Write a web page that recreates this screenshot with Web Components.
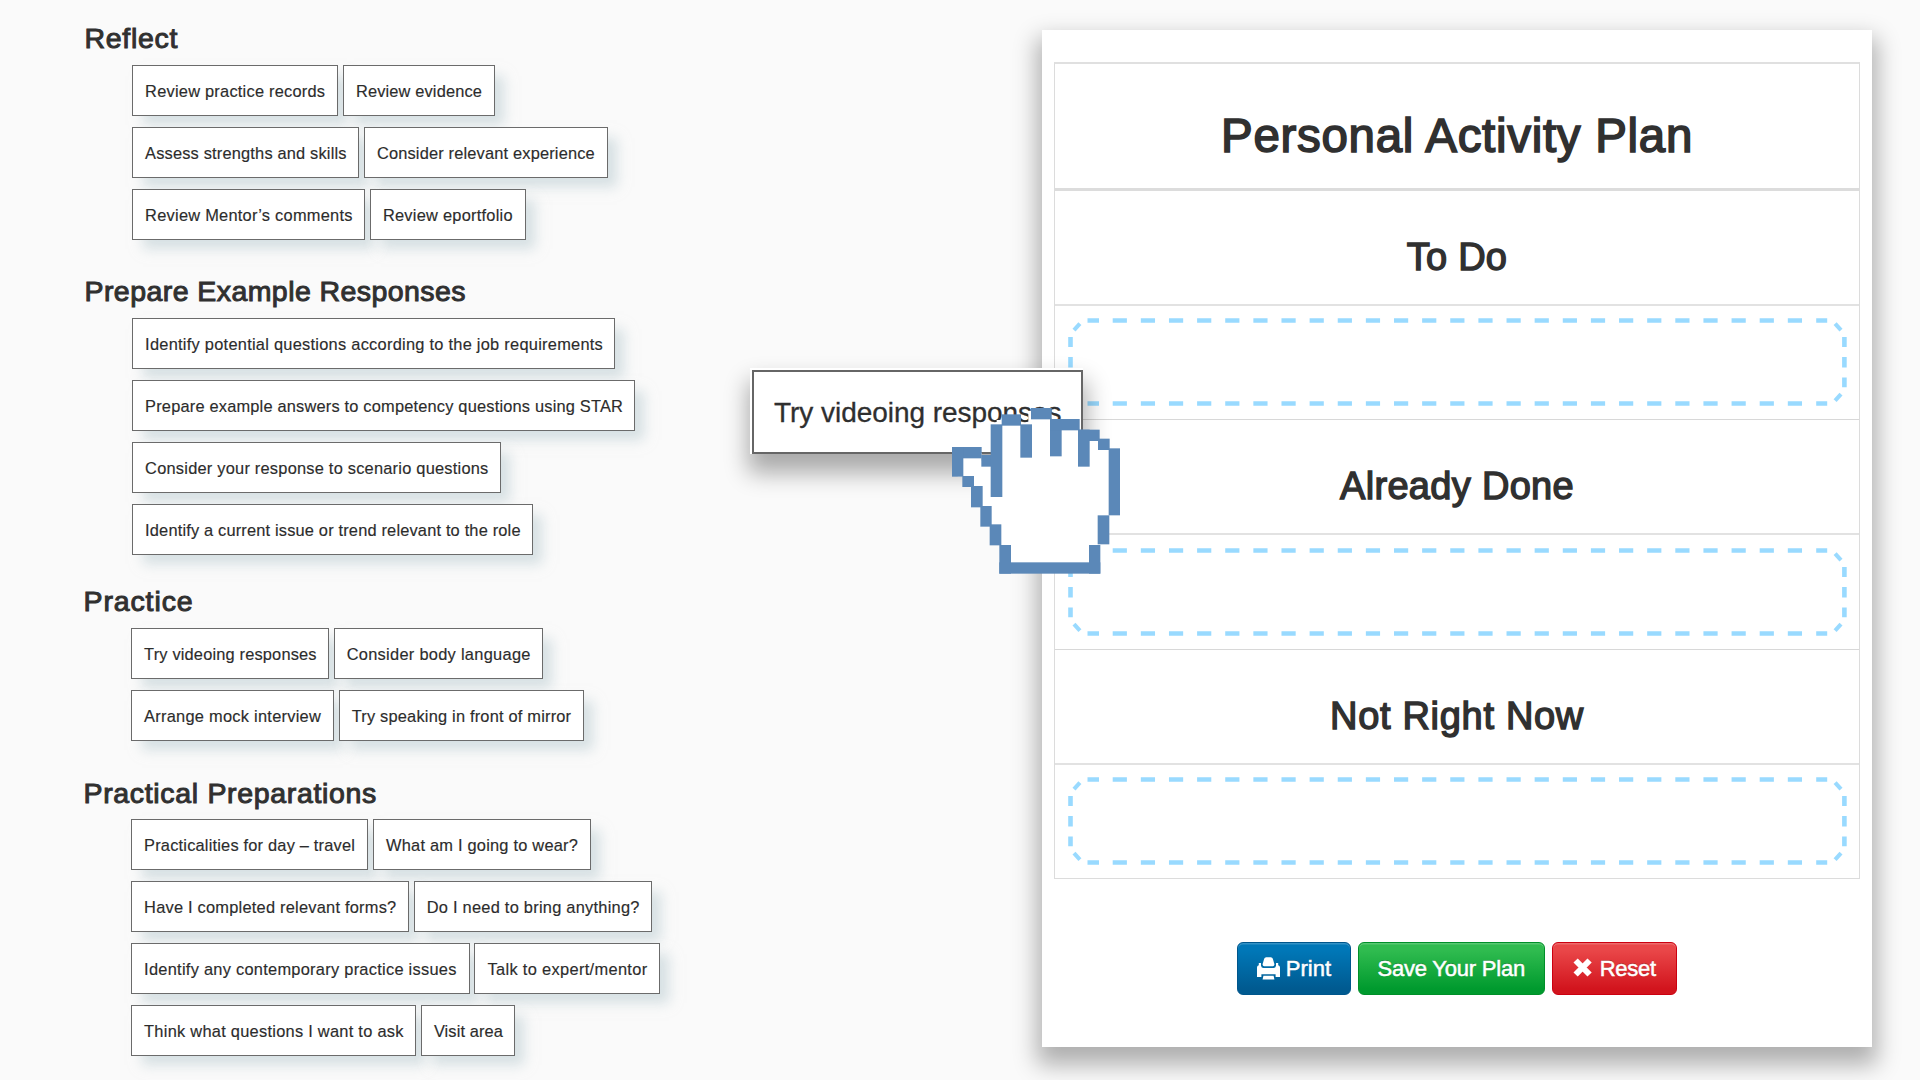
<!DOCTYPE html>
<html lang="en">
<head>
<meta charset="utf-8">
<title>Personal Activity Plan</title>
<style>
  html, body { margin: 0; padding: 0; }
  body {
    width: 1920px; height: 1080px; overflow: hidden;
    background: #fafafa; color: #303030;
    font-family: "Liberation Sans", Arial, sans-serif;
  }
</style>
</head>
<body>
<plan-page>
  <activity-group slot="groups" style="--top:21px;--left:84.500px;--h:44px;--indent:47.500px">
    <fit-text slot="title" w="93.500">Reflect</fit-text>
    <chip-row>
      <activity-chip w="206.3" t="180.2">Review practice records</activity-chip>
      <activity-chip w="152.2" t="126">Review evidence</activity-chip>
    </chip-row>
    <chip-row>
      <activity-chip w="227.2" t="201.6">Assess strengths and skills</activity-chip>
      <activity-chip w="244.2" t="218">Consider relevant experience</activity-chip>
    </chip-row>
    <chip-row>
      <activity-chip w="233.2" t="207.600">Review Mentor’s comments</activity-chip>
      <activity-chip w="156" t="130">Review eportfolio</activity-chip>
    </chip-row>
  </activity-group>

  <activity-group slot="groups" style="--top:34px;--left:84.500px;--h:44px;--indent:47.500px">
    <fit-text slot="title" w="381.500">Prepare Example Responses</fit-text>
    <chip-row><activity-chip w="483.4" t="458">Identify potential questions according to the job requirements</activity-chip></chip-row>
    <chip-row><activity-chip w="503.4" t="478">Prepare example answers to competency questions using STAR</activity-chip></chip-row>
    <chip-row><activity-chip w="368.8" t="343.4">Consider your response to scenario questions</activity-chip></chip-row>
    <chip-row><activity-chip w="401.4" t="375.6">Identify a current issue or trend relevant to the role</activity-chip></chip-row>
  </activity-group>

  <activity-group slot="groups" style="--top:29px;--left:83.500px;--h:44px;--indent:47.500px">
    <fit-text slot="title" w="110">Practice</fit-text>
    <chip-row>
      <activity-chip w="198" t="172.600">Try videoing responses</activity-chip>
      <activity-chip w="209" t="184">Consider body language</activity-chip>
    </chip-row>
    <chip-row>
      <activity-chip w="203" t="177">Arrange mock interview</activity-chip>
      <activity-chip w="245.4" t="219.600">Try speaking in front of mirror</activity-chip>
    </chip-row>
  </activity-group>

  <activity-group slot="groups" style="--top:35px;--left:83.500px;--h:43px;--indent:47.500px">
    <fit-text slot="title" w="293.500">Practical Preparations</fit-text>
    <chip-row>
      <activity-chip w="237.4" t="211">Practicalities for day – travel</activity-chip>
      <activity-chip w="218" t="192">What am I going to wear?</activity-chip>
    </chip-row>
    <chip-row>
      <activity-chip w="278" t="252.3">Have I completed relevant forms?</activity-chip>
      <activity-chip w="238.6" t="213">Do I need to bring anything?</activity-chip>
    </chip-row>
    <chip-row>
      <activity-chip w="338.8" t="312.600">Identify any contemporary practice issues</activity-chip>
      <activity-chip w="185.4" t="160">Talk to expert/mentor</activity-chip>
    </chip-row>
    <chip-row>
      <activity-chip w="285.2" t="259.600">Think what questions I want to ask</activity-chip>
      <activity-chip w="94.4" t="69">Visit area</activity-chip>
    </chip-row>
  </activity-group>

  <plan-panel slot="panel">
    <fit-text slot="title" w="472">Personal Activity Plan</fit-text>
    <plan-section><fit-text w="100.500">To Do</fit-text></plan-section>
    <plan-section><fit-text w="234">Already Done</fit-text></plan-section>
    <plan-section><fit-text w="254">Not Right Now</fit-text></plan-section>
    <plan-button slot="actions" style="--w:114px;--a:#0077b7;--b:#005a90;--edge:#00568c">
      <svg slot="icon" width="23" height="23" viewBox="0 0 23 23" fill="#fff"><path d="M7.200 1.800Q7.700 .3 9.200 .3h4.600q1.500 0 2 1.500l1.500 5q.4 2.400-1.500 2.400H7.200q-1.900 0-1.500-2.400z"/><path d="M1.800 6h2.200v2.800q.4 2.200 2.500 2.200h10q2.100 0 2.500-2.200V6h2.200v2.300q1.800.3 1.800 2.200v9.500h-4.400v-2.700H4.400V20H0v-9.500q0-1.900 1.800-2.200z"/><path d="M6.400 18.800h10.200l.8 3.600H5.600z"/></svg>
      <fit-text w="45.500">Print</fit-text>
    </plan-button>
    <plan-button slot="actions" style="--w:187.500px;--a:#2fbb4f;--b:#009a2e;--edge:#008f29;--g:0px">
      <fit-text w="147.500">Save Your Plan</fit-text>
    </plan-button>
    <plan-button slot="actions" style="--w:125.500px;--a:#e94648;--b:#d2141d;--edge:#cc0010;--g:8px">
      <svg slot="icon" width="19" height="23" viewBox="0 0 19 23" fill="none" stroke="#fff" stroke-width="6"><path d="M2.600 3.500L16.600 17.500M16.600 3.500L2.600 17.500"/></svg>
      <fit-text w="56">Reset</fit-text>
    </plan-button>
  </plan-panel>

  <drag-card slot="overlay"><fit-text w="287.500">Try videoing responses</fit-text></drag-card>
  <hand-cursor slot="overlay"></hand-cursor>
</plan-page>

<script>
const define = (name, html, ready) => {
  const tpl = document.createElement('template');
  tpl.innerHTML = html;
  customElements.define(name, class extends HTMLElement {
    connectedCallback() {
      if (this.shadowRoot) return;
      this.attachShadow({ mode: 'open' }).appendChild(tpl.content.cloneNode(true));
      if (ready) ready(this, this.shadowRoot);
    }
  });
};

// Spreads the letters of a text so that its line has the given width.
const fit = (el, text, width) => {
  el.style.letterSpacing = '0px';
  const natural = el.getBoundingClientRect().width;
  el.style.letterSpacing = ((width - natural) / text.trim().length).toFixed(4) + 'px';
};

define('plan-page', `
  <style>
    :host { display: flex; position: relative; width: 1920px; height: 1080px; overflow: hidden; }
    .groups { width: 1042px; flex: none; display: flex; flex-direction: column; }
  </style>
  <div class="groups"><slot name="groups"></slot></div>
  <slot name="panel"></slot>
  <slot name="overlay"></slot>`);

define('activity-group', `
  <style>
    :host { display: block; padding: var(--top) 0 0 var(--left); }
    .title { height: var(--h); line-height: 34px; font-size: 28.500px; -webkit-text-stroke: 1px #303030; }
    .rows { padding-left: var(--indent); display: flex; flex-direction: column; gap: 11px; }
  </style>
  <div class="title"><slot name="title"></slot></div>
  <div class="rows"><slot></slot></div>`);

define('chip-row', `
  <style>:host { display: flex; gap: 4.600px; }</style>
  <slot></slot>`);

define('activity-chip', `
  <style>
    :host { display: block; box-sizing: border-box; height: 51px; line-height: 50px; padding-left: 12.100px;
      border: 1px solid #6b6b6b; background: #fff; font-size: 16.400px; white-space: nowrap; color: #2c2c2c;
      -webkit-text-stroke: .15px #2c2c2c;
      box-shadow: 10px 10px 12px -1px rgba(190, 206, 212, .6); }
    span { display: inline-block; }
  </style>
  <span><slot></slot></span>`);

define('fit-text', `
  <style>
    :host { display: inline-block; white-space: nowrap; }
  </style>
  <slot></slot>`);

define('plan-panel', `
  <style>
    :host { display: block; flex: none; box-sizing: border-box; width: 830px; height: 1017px; margin-top: 30px;
      padding: 32px 12px 0; background: #fff; box-shadow: 0 13px 22px 5px rgba(0,0,0,.3); }
    .table { border: 1px solid #dcdcdc; border-top: 2px solid #e0e0e0; box-sizing: border-box; height: 817px; }
    .title { display: flex; justify-content: center; box-sizing: border-box; height: 126.500px; padding-top: 44px;
      border-bottom: 3px solid #dcdcdc; line-height: 56px; font-size: 47.500px; -webkit-text-stroke: 1.600px #303030; }
    .actions { display: flex; justify-content: center; gap: 6.500px; padding-top: 63px; }
  </style>
  <div class="table">
    <div class="title"><slot name="title"></slot></div>
    <slot></slot>
  </div>
  <div class="actions"><slot name="actions"></slot></div>`);

define('plan-section', `
  <style>
    :host { display: block; box-sizing: border-box; height: 229.600px; border-bottom: 1px solid #d8d8d8; }
    :host(:last-of-type) { border-bottom: 0; }
    .head { box-sizing: border-box; height: 115px; border-bottom: 2px solid #e2e2e2; padding-top: 42px;
      line-height: 48px; text-align: center; font-size: 38px; -webkit-text-stroke: 1.400px #303030; }
    .zone { padding: 12.600px 0 0 12.600px; }
    svg { display: block; }
  </style>
  <div class="head"><slot></slot></div>
  <div class="zone"><svg width="779" height="89" fill="none" stroke="#99daff" stroke-width="4.600"></svg></div>`,
(host, root) => {
  let h = 'M19.500 0h11.500M748.200 0h11';
  for (let i = 0; i < 25; i++) h += `M${(44.700 + i * 28.130).toFixed(2)} 0h14.200`;
  const v = 'M0 19v9.900M0 39v10.400M0 59.400v9.800';
  const corner = 'M6 12.100L11.900 5.700';
  root.querySelector('svg').innerHTML = `
    <path d="${h}" transform="translate(0 2.500)"/><path d="${h}" transform="translate(0 85.500)"/>
    <path d="${v}" transform="translate(2.500 0)"/><path d="${v}" transform="translate(776.400 0)"/>
    <g stroke-width="4.100"><path d="${corner}"/><path d="${corner}" transform="matrix(-1 0 0 1 779 0)"/>
    <path d="${corner}" transform="matrix(1 0 0 -1 0 88.300)"/><path d="${corner}" transform="matrix(-1 0 0 -1 779 88.300)"/></g>`;
});

define('plan-button', `
  <style>
    :host { display: flex; box-sizing: border-box; width: var(--w); height: 53px; align-items: center; justify-content: center;
      gap: var(--g, 6px); border: 1.500px solid var(--edge); border-radius: 6px; color: #fff;
      background: linear-gradient(var(--a) 15%, var(--b) 90%); box-shadow: inset 0 1.500px 0 rgba(255,255,255,.2);
      font-size: 22px; line-height: 51px; -webkit-text-stroke: .5px #fff; text-shadow: 0 -1px 0 rgba(0,0,0,.25); }
  </style>
  <slot name="icon"></slot><slot></slot>`);

define('drag-card', `
  <style>
    :host { display: block; position: absolute; left: 752px; top: 370px; box-sizing: border-box; width: 331px; height: 84px;
      border: 2px solid #666; background: #fff; padding-left: 20px; line-height: 81px; font-size: 28px; color: #2f2f2f;
      -webkit-text-stroke: .3px #2f2f2f;
      box-shadow: -1px -1px 0 1px #fff, 0 15px 22px 4px rgba(0,0,0,.32); }
  </style>
  <slot></slot>`);

define('hand-cursor', `
  <style>
    :host { display: block; position: absolute; left: 952px; top: 408px; width: 169px; height: 166px; }
    svg { display: block; }
  </style>
  <svg width="169" height="166" viewBox="666 174 507 498">
    <path fill="#fff" d="M683 308H755V332H800V210H873V224H895V190H962V224H1046V256H1107V283H1139V297H1153V496H1120V585H1094V654H825V585H796V525H768V470H740V410H714V380H683z"/>
    <g fill="#5b88b8"></g>
  </svg>`,
(host, root) => {
  const blocks = [
    [666,291,755,325],[666,291,700,380],[754,315,790,350],[782,223,817,441],[815,193,873,227],[871,223,906,323],
    [903,174,965,208],[960,207,995,319],[960,207,1049,241],[1044,239,1079,350],[1044,239,1109,273],[1104,266,1139,300],
    [1136,295,1170,496],[1103,496,1138,583],[1077,585,1111,671],[808,637,1111,671],[808,585,843,671],[779,523,814,586],
    [751,468,785,530],[723,408,758,472],[697,378,732,411]];
  root.querySelector('g').innerHTML = blocks
    .map(([a, b, c, d]) => `<rect x="${a}" y="${b}" width="${c - a}" height="${d - b}"/>`).join('');
});

document.querySelectorAll('activity-chip').forEach(chip => {
  chip.style.width = chip.getAttribute('w') + 'px';
  fit(chip.shadowRoot.querySelector('span'), chip.textContent, +chip.getAttribute('t'));
});
document.querySelectorAll('fit-text').forEach(el => fit(el, el.textContent, +el.getAttribute('w')));
</script>
</body>
</html>
